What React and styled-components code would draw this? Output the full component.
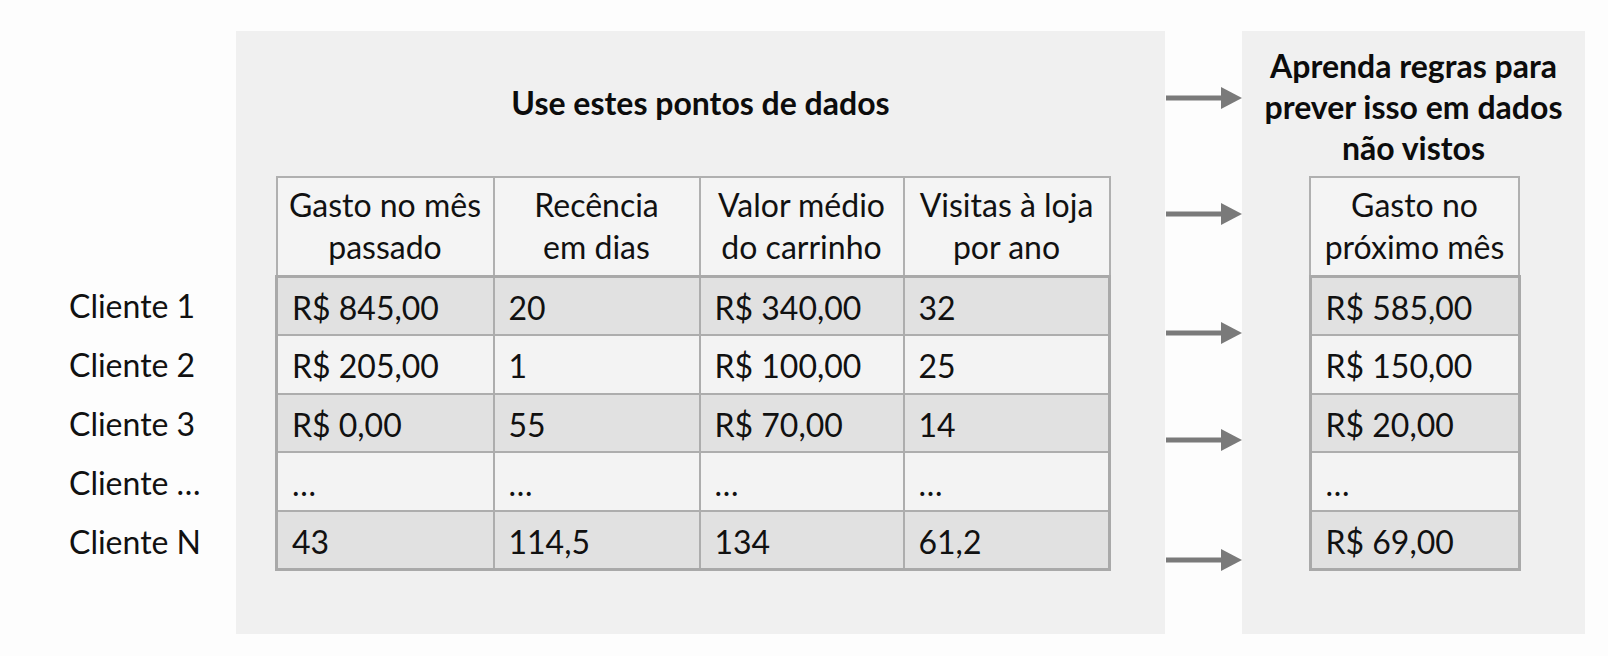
import React from 'react';
import styled, { createGlobalStyle } from 'styled-components';

const GlobalStyle = createGlobalStyle`
  html, body {
    margin: 0;
    padding: 0;
    background: #fdfdfd;
  }
  body {
    font-family: Lato, "Open Sans", "Liberation Sans", sans-serif;
    color: #111;
  }
`;

const Page = styled.div`
  display: flex;
  align-items: flex-start;
  width: 1608px;
  height: 656px;
  padding-top: 31px;
  box-sizing: border-box;
`;

const LabelColumn = styled.div`
  width: 236px;
  padding: 244px 0 0 69px;
  box-sizing: border-box;
  display: flex;
  flex-direction: column;
`;

const RowLabel = styled.div`
  height: 58.8px;
  display: flex;
  align-items: center;
  font-size: 32px;
  padding-top: 3px;
  box-sizing: border-box;
`;

const Panel = styled.section`
  width: ${props => props.width}px;
  height: 603px;
  background: #f0f0f0;
  box-sizing: border-box;
  padding-top: ${props => props.top}px;
  display: flex;
  flex-direction: column;
  align-items: ${props => (props.center ? 'center' : 'flex-start')};
`;

const Title = styled.h2`
  margin: 0;
  font-size: 32px;
  font-weight: 700;
  line-height: 41px;
  text-align: center;
  align-self: stretch;
  color: #0c0c0c;
`;

const ArrowColumn = styled.div`
  width: 77px;
  height: 603px;
  padding-left: 1px;
  box-sizing: border-box;
  display: flex;
  flex-direction: column;
`;

const ArrowSlot = styled.div`
  height: 24px;
  margin-top: ${props => props.gap}px;
`;

const Table = styled.table`
  border-collapse: collapse;
  margin-top: ${props => props.gap}px;
  margin-left: ${props => props.left || 0}px;
  table-layout: fixed;
  font-size: 32px;
`;

const HeadCell = styled.th`
  width: ${props => props.w}px;
  height: 99px;
  padding: 0;
  border: 2px solid #b0b0b0;
  background: #f4f4f4;
  font-weight: 400;
  line-height: 42px;
  text-align: center;
  box-sizing: border-box;
`;

const Body = styled.tbody`
  border: 3px solid #a9a9a9;
`;

const Row = styled.tr`
  background: ${props => (props.dark ? '#e1e1e1' : '#f3f3f3')};
`;

const Cell = styled.td`
  height: 58.8px;
  padding: 3px 0 0 14px;
  border: 2px solid #adadad;
  box-sizing: border-box;
  white-space: nowrap;
`;

const Arrow = () => (
  <svg width="76" height="24" viewBox="0 0 76 24">
    <rect x="0" y="9.5" width="57" height="5" fill="#7a7a7a" />
    <polygon points="55,1 76,12 55,23" fill="#7a7a7a" />
  </svg>
);

const DataTable = ({ heads, rows, gap, left }) => (
  <Table gap={gap} left={left}>
    <thead>
      <tr>
        {heads.map((h, i) => (
          <HeadCell key={i} w={h.w}>
            {h.lines[0]}
            <br />
            {h.lines[1]}
          </HeadCell>
        ))}
      </tr>
    </thead>
    <Body>
      {rows.map((r, i) => (
        <Row key={i} dark={i % 2 === 0}>
          {r.map((c, j) => (
            <Cell key={j}>{c}</Cell>
          ))}
        </Row>
      ))}
    </Body>
  </Table>
);

const clients = ['Cliente 1', 'Cliente 2', 'Cliente 3', 'Cliente …', 'Cliente N'];

const featureHeads = [
  { w: 217, lines: ['Gasto no mês', 'passado'] },
  { w: 206, lines: ['Recência', 'em dias'] },
  { w: 204, lines: ['Valor médio', 'do carrinho'] },
  { w: 206, lines: ['Visitas à loja', 'por ano'] },
];

const featureRows = [
  ['R$ 845,00', '20', 'R$ 340,00', '32'],
  ['R$ 205,00', '1', 'R$ 100,00', '25'],
  ['R$ 0,00', '55', 'R$ 70,00', '14'],
  ['…', '…', '…', '…'],
  ['43', '114,5', '134', '61,2'],
];

const targetHeads = [{ w: 209, lines: ['Gasto no', 'próximo mês'] }];

const targetRows = [['R$ 585,00'], ['R$ 150,00'], ['R$ 20,00'], ['…'], ['R$ 69,00']];

// spacing between arrows is uneven in the source diagram
const arrowGaps = [55, 92, 95, 83, 96];

export default function App() {
  return (
    <>
      <GlobalStyle />
      <Page>
        <LabelColumn>
          {clients.map(c => (
            <RowLabel key={c}>{c}</RowLabel>
          ))}
        </LabelColumn>

        <Panel width={929} top={51}>
          <Title>Use estes pontos de dados</Title>
          <DataTable heads={featureHeads} rows={featureRows} gap={53} left={39} />
        </Panel>

        <ArrowColumn>
          {arrowGaps.map((g, i) => (
            <ArrowSlot key={i} gap={g}>
              <Arrow />
            </ArrowSlot>
          ))}
        </ArrowColumn>

        <Panel width={343} top={14} center>
          <Title>
            Aprenda regras para
            <br />
            prever isso em dados
            <br />
            não vistos
          </Title>
          <DataTable heads={targetHeads} rows={targetRows} gap={8} left={2} />
        </Panel>
      </Page>
    </>
  );
}
